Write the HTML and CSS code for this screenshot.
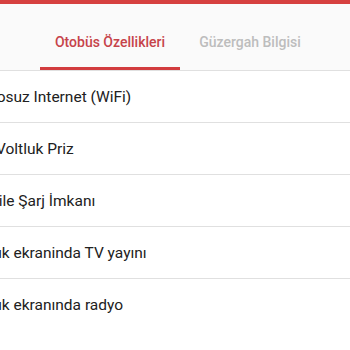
FILE: index.html
```html
<!DOCTYPE html>
<html lang="tr">
<head>
<meta charset="utf-8">
<link rel="stylesheet" href="styles.css">
</head>
<body>
<div class="topbar"></div>
<nav class="tabs">
  <div class="tab active">Otobüs Özellikleri</div>
  <div class="tab">Güzergah Bilgisi</div>
</nav>
<ul class="features">
  <li>Kablosuz Internet (WiFi)</li>
  <li>220 Voltluk Priz</li>
  <li>USB ile Şarj İmkanı</li>
  <li>Koltuk ekraninda TV yayını</li>
  <li>Koltuk ekranında radyo</li>
</ul>
</body>
</html>
```
FILE: styles.css
```css
html, body {
  margin: 0;
  padding: 0;
  background: #ffffff;
  font-family: Roboto, "Liberation Sans", sans-serif;
  overflow: hidden;
}
.topbar {
  height: 4px;
  background: #d6403f;
}
.tabs {
  display: flex;
  padding: 10px 0 0 40px;
  background: #fafafa;
  border-bottom: 1px solid #e0e0e0;
}
.tab {
  width: 140px;
  height: 56px;
  box-sizing: border-box;
  display: flex;
  align-items: center;
  justify-content: center;
  font-size: 14px;
  font-weight: 500;
  color: #bdbdbd;
  border-bottom: 3px solid transparent;
  padding-top: 2px;
}
.tab.active {
  color: #c6434a;
  border-bottom-color: #d23c3e;
}
.features {
  list-style: none;
  margin: 0 0 0 -34px;
  padding: 0;
}
.features li {
  height: 51px;
  display: flex;
  align-items: center;
  font-size: 15.5px;
  color: #212121;
  white-space: nowrap;
  border-bottom: 1px solid #e0e0e0;
}
.features li:last-child {
  border-bottom: none;
}
```
